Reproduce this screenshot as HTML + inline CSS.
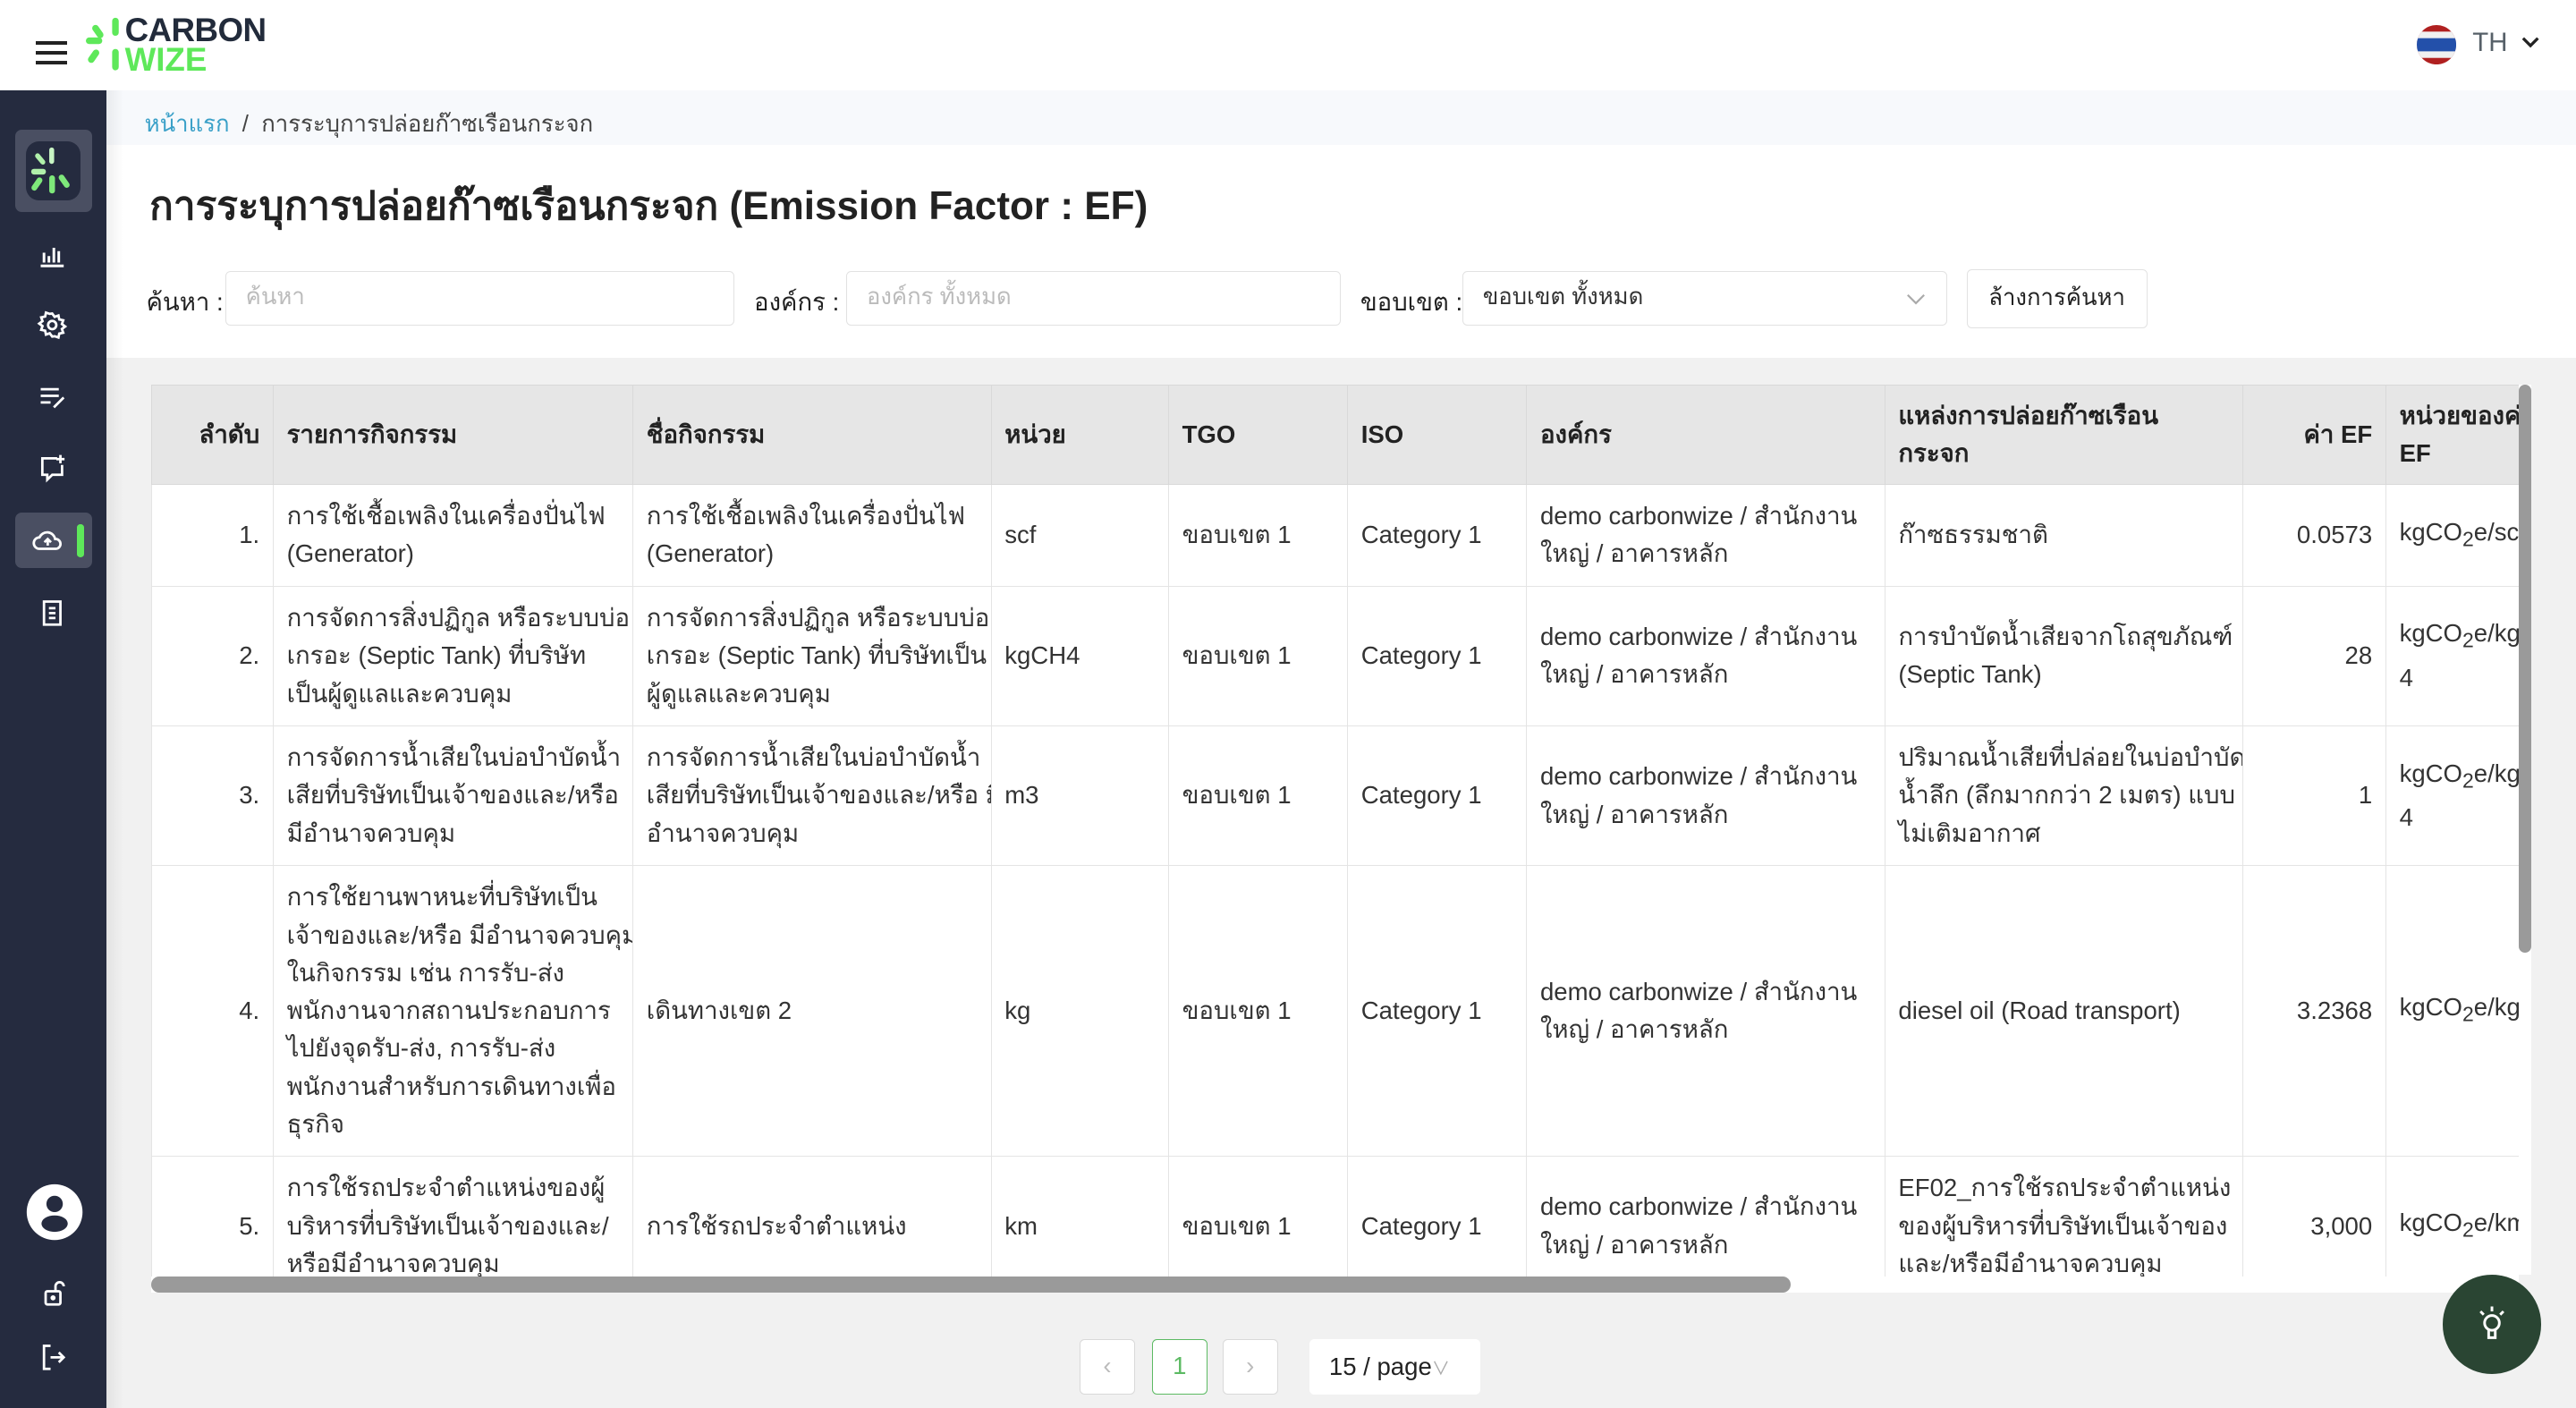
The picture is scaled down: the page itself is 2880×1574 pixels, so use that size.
<!DOCTYPE html>
<html><head><meta charset="utf-8">
<style>
html,body{margin:0;padding:0;width:2880px;height:1574px;overflow:hidden;background:#fff}
#w{zoom:1.83673;width:1568px;height:857px;position:relative;font-family:"Liberation Sans","Noto Sans CJK SC",sans-serif;color:#222;overflow:hidden}
.a{position:absolute}
.side{left:0;top:55px;width:65px;height:802px;background:#252b3f}
.ic{position:absolute;left:22px;width:20px;height:20px}
table{border-collapse:collapse;table-layout:fixed;font-size:15px;line-height:23px}
td,th{border:1px solid #e4e4e4;padding:0 8px;vertical-align:middle;text-align:left;overflow:hidden;white-space:nowrap}
th{background:#e6e6e6;font-weight:bold;height:60px;border-color:#d9d9d9}
td{background:#fff;color:#333}
.r{text-align:right}
.inp{border:1px solid #e2e2e2;border-radius:3px;height:33px;box-sizing:border-box;font-size:14px;color:#bbb;padding:0 12px;line-height:31px;background:#fff}
.pg{border:1px solid #d9d9d9;border-radius:3px;width:34px;height:34px;box-sizing:border-box;text-align:center;line-height:32px;background:#fff;color:#bbb;font-size:15px}
</style></head><body><div id="w">
<div class="a" style="left:0;top:0;width:1568px;height:55px;background:#fff"></div>
<div class="a" style="left:22px;top:25px;width:19px;height:2.5px;background:#222;box-shadow:0 6px 0 #222,0 12px 0 #222"></div>
<svg class="a" style="left:52px;top:10px" width="24" height="34" viewBox="0 0 24 34">
<g fill="#5ee85a"><rect x="16" y="1" width="4" height="11" rx="2"/><rect x="5" y="5" width="4" height="9" rx="2" transform="rotate(-35 7 9)"/><rect x="0" y="13" width="10" height="4" rx="2"/><rect x="3" y="20" width="4" height="9" rx="2" transform="rotate(35 5 24)"/><rect x="16" y="20" width="4" height="13" rx="2"/></g></svg>
<div class="a" style="left:76px;top:9px;font-weight:bold;font-size:20px;line-height:18px;color:#222b3b;letter-spacing:-0.3px">CARBON</div>
<div class="a" style="left:76px;top:27px;font-weight:bold;font-size:20px;line-height:18px;color:#5ee85a">WIZE</div>
<svg class="a" style="left:1471px;top:15px" width="24" height="24" viewBox="0 0 24 24"><clipPath id="c"><circle cx="12" cy="12" r="12"/></clipPath><g clip-path="url(#c)"><rect width="24" height="24" fill="#b02020"/><rect y="4" width="24" height="16" fill="#f0f0f0"/><rect y="8" width="24" height="8" fill="#2350aa"/></g></svg>
<div class="a" style="left:1505px;top:17px;font-size:16px;color:#566068">TH</div>
<svg class="a" style="left:1535px;top:22px" width="11" height="8" viewBox="0 0 11 8"><path d="M1 1.5l4.5 4.5L10 1.5" stroke="#222" stroke-width="1.8" fill="none"/></svg>
<div class="a side"></div>
<div class="a" style="left:9px;top:79px;width:47px;height:50px;background:#4a4f62;border-radius:4px"></div>
<div class="a" style="left:16px;top:86px;width:33px;height:36px;background:#252b3f;border-radius:8px"></div>
<svg class="a" style="left:18px;top:89px" width="28" height="30" viewBox="0 0 28 30"><g fill="#7ee87a"><rect x="12" y="1" width="3" height="10" rx="1.5" fill="#c8f5c4"/><rect x="5" y="4" width="3" height="8" rx="1.5" transform="rotate(-40 6.5 8)" fill="#b0f0aa"/><rect x="1" y="14" width="9" height="3.5" rx="1.7" fill="#b0f0aa"/><rect x="3" y="19" width="3.5" height="9" rx="1.7" transform="rotate(35 5 23)"/><rect x="12" y="18" width="3.5" height="11" rx="1.7"/><rect x="19" y="17" width="3.5" height="9" rx="1.7" transform="rotate(-35 21 21)"/></g></svg>
<svg class="ic" style="top:145px" viewBox="0 0 20 20" fill="none" stroke="#fff" stroke-width="1.6"><path d="M3 17h14M5 15V9M8 15V11M11 15V6M14 15V8"/></svg>
<svg class="ic" style="top:188px" viewBox="0 0 20 20" fill="none" stroke="#fff" stroke-width="1.5"><circle cx="10" cy="10" r="2.5"/><path d="M10 3l1.5 2 2.3-.8.5 2.4 2.4.5-.8 2.3 2 1.5-2 1.5.8 2.3-2.4.5-.5 2.4-2.3-.8L10 17l-1.5-2-2.3.8-.5-2.4-2.4-.5.8-2.3-2-1.5 2-1.5-.8-2.3 2.4-.5.5-2.4 2.3.8z"/></svg>
<svg class="ic" style="top:232px" viewBox="0 0 20 20" fill="none" stroke="#fff" stroke-width="1.5"><path d="M3 5h11M3 9h11M3 13h6M11 16l6-6"/></svg>
<svg class="ic" style="top:275px" viewBox="0 0 20 20" fill="none" stroke="#fff" stroke-width="1.5"><path d="M13 4H4v10h3v3l3-3h6V8M15 2v5M12.5 4.5h5"/></svg>
<div class="a" style="left:9px;top:312px;width:47px;height:34px;background:#4a4f62;border-radius:4px"></div>
<div class="a" style="left:47px;top:319px;width:4px;height:20px;background:#5ee85a;border-radius:2px"></div>
<svg class="ic" style="left:19px;top:319px" viewBox="0 0 20 20" fill="none" stroke="#fff" stroke-width="1.5"><path d="M5 15a3.5 3.5 0 0 1 0-7 5 5 0 0 1 9.5 1 3 3 0 0 1 .5 6zM10 13V9M8 11l2-2 2 2"/></svg>
<svg class="ic" style="top:363px" viewBox="0 0 20 20" fill="none" stroke="#fff" stroke-width="1.5"><path d="M5 3h10v14H5zM8 7h4M8 10h4M8 13h4"/></svg>
<svg class="a" style="left:15px;top:720px" width="36" height="36" viewBox="0 0 36 36"><circle cx="18" cy="18" r="17" fill="#fff"/><circle cx="18" cy="13" r="5" fill="#252b3f"/><ellipse cx="18" cy="25" rx="8" ry="5" fill="#252b3f"/></svg>
<svg class="ic" style="top:777px" viewBox="0 0 20 20" fill="none" stroke="#fff" stroke-width="1.5"><rect x="6" y="9" width="9" height="8" rx="1"/><path d="M12 9V6a2.5 2.5 0 0 1 5 0"/><circle cx="10.5" cy="13" r=".8" fill="#fff"/></svg>
<svg class="ic" style="top:816px" viewBox="0 0 20 20" fill="none" stroke="#fff" stroke-width="1.5"><path d="M9 3H5v14h4M9 10h8M14 7l3 3-3 3"/></svg>
<div class="a" style="left:65px;top:55px;width:1503px;height:33px;background:#f7f9fc"></div>
<div class="a" style="left:88px;top:64px;font-size:14px;color:#444"><span style="color:#3aa0c8">หน้าแรก</span> &nbsp;/&nbsp; การระบุการปล่อยก๊าซเรือนกระจก</div>
<div class="a" style="left:91px;top:106px;font-size:24px;font-weight:bold;color:#222">การระบุการปล่อยก๊าซเรือนกระจก (Emission Factor : EF)</div>
<div class="a" style="left:89px;top:172px;font-size:15px">ค้นหา :</div>
<div class="a inp" style="left:137px;top:165px;width:310px">ค้นหา</div>
<div class="a" style="left:459px;top:172px;font-size:15px">องค์กร :</div>
<div class="a inp" style="left:515px;top:165px;width:301px">องค์กร ทั้งหมด</div>
<div class="a" style="left:828px;top:172px;font-size:15px">ขอบเขต :</div>
<div class="a inp" style="left:890px;top:165px;width:295px;color:#333">ขอบเขต ทั้งหมด</div>
<svg class="a" style="left:1160px;top:178px" width="12" height="8" viewBox="0 0 12 8"><path d="M1 1.5l5 5 5-5" stroke="#aaa" stroke-width="1.2" fill="none"/></svg>
<div class="a inp" style="left:1197px;top:164px;width:110px;height:36px;line-height:34px;color:#222;text-align:center;padding:0">ล้างการค้นหา</div>
<div class="a" style="left:65px;top:218px;width:1503px;height:639px;background:#f1f1f1"></div>
<div class="a" style="left:65px;top:55px;width:10px;height:802px;background:linear-gradient(90deg,rgba(0,0,0,.06),rgba(0,0,0,0))"></div>
<div class="a" style="left:92px;top:234px;width:1441px;height:543px;overflow:hidden;background:#fff">
<table style="width:1480px">
<colgroup><col style="width:74px"><col style="width:219px"><col style="width:218px"><col style="width:108px"><col style="width:109px"><col style="width:109px"><col style="width:218px"><col style="width:218px"><col style="width:87px"><col style="width:120px"></colgroup>
<tr><th class="r">ลำดับ</th><th>รายการกิจกรรม</th><th>ชื่อกิจกรรม</th><th>หน่วย</th><th>TGO</th><th>ISO</th><th>องค์กร</th><th>แหล่งการปล่อยก๊าซเรือน<br>กระจก</th><th class="r">ค่า EF</th><th>หน่วยของค่า<br>EF</th></tr>
<tr style="height:62px"><td class="r">1.</td><td>การใช้เชื้อเพลิงในเครื่องปั่นไฟ<br>(Generator)</td><td>การใช้เชื้อเพลิงในเครื่องปั่นไฟ<br>(Generator)</td><td>scf</td><td>ขอบเขต 1</td><td>Category 1</td><td>demo carbonwize / สำนักงาน<br>ใหญ่ / อาคารหลัก</td><td>ก๊าซธรรมชาติ</td><td class="r">0.0573</td><td>kgCO<sub>2</sub>e/scf</td></tr>
<tr style="height:85px"><td class="r">2.</td><td>การจัดการสิ่งปฏิกูล หรือระบบบ่อ<br>เกรอะ (Septic Tank) ที่บริษัท<br>เป็นผู้ดูแลและควบคุม</td><td>การจัดการสิ่งปฏิกูล หรือระบบบ่อ<br>เกรอะ (Septic Tank) ที่บริษัทเป็น<br>ผู้ดูแลและควบคุม</td><td>kgCH4</td><td>ขอบเขต 1</td><td>Category 1</td><td>demo carbonwize / สำนักงาน<br>ใหญ่ / อาคารหลัก</td><td>การบำบัดน้ำเสียจากโถสุขภัณฑ์<br>(Septic Tank)</td><td class="r">28</td><td>kgCO<sub>2</sub>e/kgCH<br>4</td></tr>
<tr style="height:85px"><td class="r">3.</td><td>การจัดการน้ำเสียในบ่อบำบัดน้ำ<br>เสียที่บริษัทเป็นเจ้าของและ/หรือ<br>มีอำนาจควบคุม</td><td>การจัดการน้ำเสียในบ่อบำบัดน้ำ<br>เสียที่บริษัทเป็นเจ้าของและ/หรือ มี<br>อำนาจควบคุม</td><td>m3</td><td>ขอบเขต 1</td><td>Category 1</td><td>demo carbonwize / สำนักงาน<br>ใหญ่ / อาคารหลัก</td><td>ปริมาณน้ำเสียที่ปล่อยในบ่อบำบัด<br>น้ำลึก (ลึกมากกว่า 2 เมตร) แบบ<br>ไม่เติมอากาศ</td><td class="r">1</td><td>kgCO<sub>2</sub>e/kgCH<br>4</td></tr>
<tr style="height:177px"><td class="r">4.</td><td>การใช้ยานพาหนะที่บริษัทเป็น<br>เจ้าของและ/หรือ มีอำนาจควบคุม<br>ในกิจกรรม เช่น การรับ-ส่ง<br>พนักงานจากสถานประกอบการ<br>ไปยังจุดรับ-ส่ง, การรับ-ส่ง<br>พนักงานสำหรับการเดินทางเพื่อ<br>ธุรกิจ</td><td>เดินทางเขต 2</td><td>kg</td><td>ขอบเขต 1</td><td>Category 1</td><td>demo carbonwize / สำนักงาน<br>ใหญ่ / อาคารหลัก</td><td>diesel oil (Road transport)</td><td class="r">3.2368</td><td>kgCO<sub>2</sub>e/kg</td></tr>
<tr style="height:85px"><td class="r">5.</td><td>การใช้รถประจำตำแหน่งของผู้<br>บริหารที่บริษัทเป็นเจ้าของและ/<br>หรือมีอำนาจควบคุม</td><td>การใช้รถประจำตำแหน่ง</td><td>km</td><td>ขอบเขต 1</td><td>Category 1</td><td>demo carbonwize / สำนักงาน<br>ใหญ่ / อาคารหลัก</td><td>EF02_การใช้รถประจำตำแหน่ง<br>ของผู้บริหารที่บริษัทเป็นเจ้าของ<br>และ/หรือมีอำนาจควบคุม</td><td class="r">3,000</td><td>kgCO<sub>2</sub>e/km</td></tr>
</table></div>
<div class="a" style="left:92px;top:777px;width:1441px;height:10px;background:#fff"></div>
<div class="a" style="left:92px;top:777px;width:998px;height:10px;background:#9a9a9a;border-radius:5px"></div>
<div class="a" style="left:1533px;top:234px;width:8px;height:542px;background:#fff"></div>
<div class="a" style="left:1533px;top:234px;width:8px;height:346px;background:#9a9a9a;border-radius:4px"></div>
<div class="a pg" style="left:657px;top:815px">‹</div>
<div class="a pg" style="left:701px;top:815px;border-color:#5cba63;color:#5cba63">1</div>
<div class="a pg" style="left:744px;top:815px">›</div>
<div class="a" style="left:797px;top:815px;width:104px;height:34px;background:#fff;border-radius:3px;font-size:15px;line-height:34px;padding-left:12px;box-sizing:border-box;color:#222">15 / page<span style="color:#aaa;font-size:11px">∨</span></div>
<div class="a" style="left:1487px;top:776px;width:60px;height:60px;border-radius:50%;background:#2a4533"></div>
<svg class="a" style="left:1505px;top:792px" width="24" height="28" viewBox="0 0 24 28" fill="none" stroke="#fff" stroke-width="1.6"><circle cx="12" cy="13" r="4.5"/><path d="M10 17v5h4v-5M12 3v3M5 6l2 2M19 6l-2 2"/></svg>
</div></body></html>
